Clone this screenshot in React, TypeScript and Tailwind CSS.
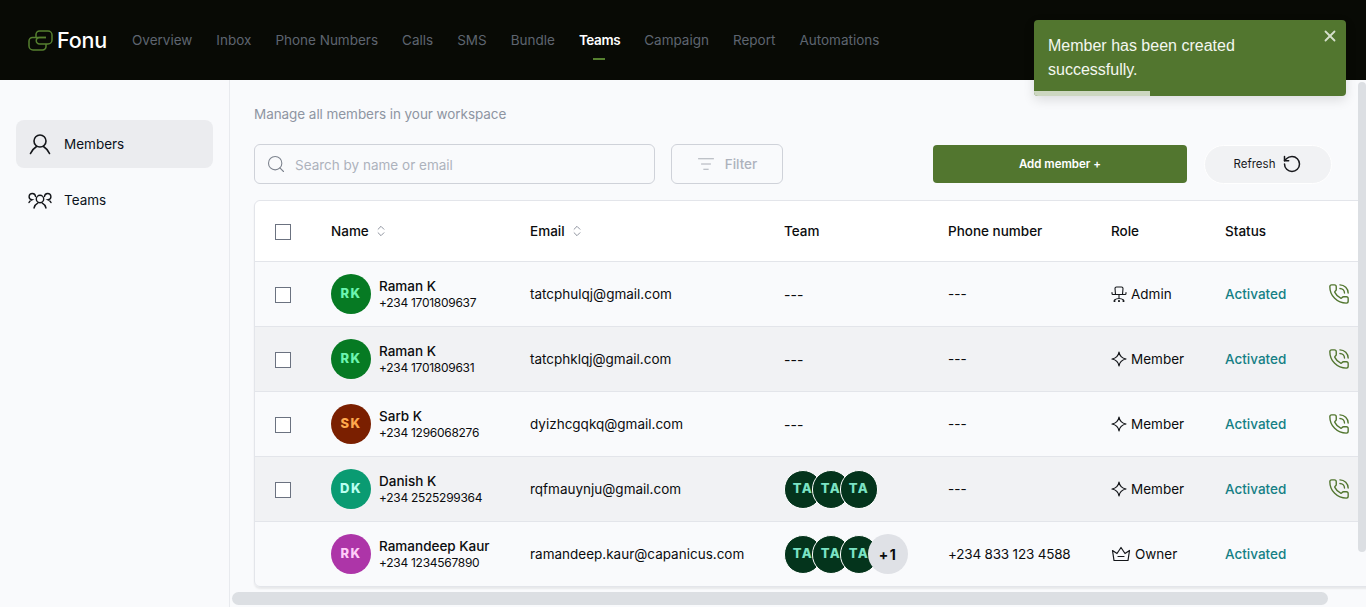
import React from 'react';
import { ChevronsUpDown, ListFilter, PhoneCall, RotateCcw, Search, X } from 'lucide-react';

const navItems = ['Overview', 'Inbox', 'Phone Numbers', 'Calls', 'SMS', 'Bundle', 'Teams', 'Campaign', 'Report', 'Automations'];

const rowCols = 'grid grid-cols-[76px_199px_254px_164px_163px_114px_104px_40px] items-center';

type Member = {
    initials: string;
    avatar: string;
    name: string;
    phone: string;
    email: string;
    teams: number;
    extra?: boolean;
    number: string;
    role: 'Admin' | 'Member' | 'Owner';
};

const members: Member[] = [
    { initials: 'RK', avatar: 'bg-[#067a23] text-[#6df5b0]', name: 'Raman K', phone: '+234 1701809637', email: 'tatcphulqj@gmail.com', teams: 0, number: '---', role: 'Admin' },
    { initials: 'RK', avatar: 'bg-[#067a23] text-[#6df5b0]', name: 'Raman K', phone: '+234 1701809631', email: 'tatcphklqj@gmail.com', teams: 0, number: '---', role: 'Member' },
    { initials: 'SK', avatar: 'bg-[#7a1f00] text-[#ffa94d]', name: 'Sarb K', phone: '+234 1296068276', email: 'dyizhcgqkq@gmail.com', teams: 0, number: '---', role: 'Member' },
    { initials: 'DK', avatar: 'bg-[#0a9b72] text-[#b9fff0]', name: 'Danish K', phone: '+234 2525299364', email: 'rqfmauynju@gmail.com', teams: 3, number: '---', role: 'Member' },
    { initials: 'RK', avatar: 'bg-[#ad35a8] text-[#ffcdf8]', name: 'Ramandeep Kaur', phone: '+234 1234567890', email: 'ramandeep.kaur@capanicus.com', teams: 3, extra: true, number: '+234 833 123 4588', role: 'Owner' },
];

function Logo() {
    return (
        <svg width="25" height="21" viewBox="0 0 25 21" fill="none" stroke="#55802f" strokeWidth="1.500">
            <path d="M8 7.500V4.500A3.500 3.500 0 0 1 11.500 1H20a4 4 0 0 1 4 4v5a4 4 0 0 1-4 4H11.500A3.250 3.250 0 0 1 11.500 7.500H18" />
            <path d="M18 7.500H4.500A3.500 3.500 0 0 0 1 11v5a4 4 0 0 0 4 4h9.500a3.500 3.500 0 0 0 3.500-3.500V14" />
        </svg>
    );
}

function UserIcon() {
    return (
        <svg width="22" height="22" viewBox="0 0 22 22" fill="none" stroke="#14161a" strokeWidth="1.600" strokeLinecap="round">
            <circle cx="11" cy="8" r="6" />
            <path d="M1.500 20.500C3 16.500 6 14.500 7.500 13.500M20.500 20.500C19 16.500 16 14.500 14.500 13.500" />
        </svg>
    );
}

function TeamsIcon() {
    return (
        <svg width="24" height="20" viewBox="0 0 24 20" fill="none" stroke="#14161a" strokeWidth="1.400" strokeLinecap="round">
            <circle cx="12" cy="9" r="3.700" />
            <path d="M6 18c.6-2.600 2.200-4.300 4-5.200M18 18c-.6-2.600-2.200-4.300-4-5.200" />
            <path d="M7.500 6.500A3.200 3.200 0 1 0 3.800 9.800C2.500 10.300 1.500 11.200 1 12.500" />
            <path d="M16.500 6.500A3.200 3.200 0 1 1 20.200 9.800C21.500 10.300 22.500 11.200 23 12.500" />
        </svg>
    );
}

function RoleIcon({ role }: { role: Member['role'] }) {
    if (role === 'Admin') {
        return (
            <svg width="16" height="16" viewBox="0 0 16 16" fill="none" stroke="#14161a" strokeWidth="1.100" strokeLinecap="round" strokeLinejoin="round">
                <path d="M4.500 8.500 4 2.500A1.500 1.500 0 0 1 5.500 1h5A1.500 1.500 0 0 1 12 2.500l-.5 6" />
                <path d="M1 6.500v1c0 .6.400 1 1 1h12c.6 0 1-.4 1-1v-1M8 8.500v4M3.500 14c1.200-1 2.800-1.500 4.500-1.500s3.300.5 4.500 1.500" />
                <circle cx="3.500" cy="15" r=".5" />
                <circle cx="8" cy="15" r=".5" />
                <circle cx="12.500" cy="15" r=".5" />
            </svg>
        );
    }
    if (role === 'Owner') {
        return (
            <svg width="20" height="16" viewBox="0 0 20 16" fill="none" stroke="#14161a" strokeWidth="1.200" strokeLinejoin="round" strokeLinecap="round">
                <path d="M1.500 4.500 6 7.500 10 1.500l4 6 4.500-3-1.500 10H3Z" />
                <path d="M7 10.500h6" />
            </svg>
        );
    }
    return (
        <svg width="16" height="16" viewBox="0 0 16 16" fill="none" stroke="#14161a" strokeWidth="1.200" strokeLinejoin="round">
            <path d="M8 1c.6 4 2.600 6.200 7 7-4.400.8-6.400 3-7 7-.6-4-2.600-6.200-7-7 4.400-.8 6.400-3 7-7Z" />
        </svg>
    );
}

function Checkbox() {
    return <div className="ml-5 mt-px h-4 w-4 border border-[#6b7280] bg-white"></div>;
}

function TeamStack({ count, extra }: { count: number; extra?: boolean }) {
    if (!count) return <span>---</span>;
    return (
        <div className="flex items-center">
            {Array.from({ length: count }).map((_, i) => (
                <div
                    key={i}
                    className="-mr-2.5 flex h-[39px] w-[38px] shrink-0 items-center justify-center rounded-full border border-white bg-[#04341c] text-[13px] font-extrabold tracking-[1.500px] text-[#7be3c4]"
                >
                    TA
                </div>
            ))}
            {extra && (
                <div className="flex h-10 w-10 shrink-0 items-center justify-center rounded-full bg-[#dfe1e6] text-[14px] font-bold tracking-[1.500px] text-[#0b0c0e]">
                    +1
                </div>
            )}
        </div>
    );
}

export default function App() {
    return (
        <div className="relative h-[607px] w-[1366px] overflow-hidden bg-[#f9fafc] font-['Inter',sans-serif] text-[14px] text-[#0b0c0e]">
            {/* Top nav */}
            <header className="flex h-20 items-center bg-[#080a05] pl-7">
                <Logo />
                <span className="ml-1 w-[52px] text-[21.500px] font-medium tracking-[-0.200px] text-white">Fonu</span>
                <nav className="ml-[23px] flex gap-6">
                    {navItems.map((item) => (
                        <div key={item} className="relative">
                            <span className={item === 'Teams' ? 'text-[13.500px] font-semibold tracking-[-0.400px] text-white' : 'text-[13.500px] text-[#5e6570]'}>
                                {item}
                            </span>
                            {item === 'Teams' && <div className="absolute left-[14px] top-[29px] h-0.5 w-3 bg-[#55802f]"></div>}
                        </div>
                    ))}
                </nav>
            </header>

            <div className="flex h-[527px]">
                {/* Sidebar */}
                <aside className="w-[230px] shrink-0 border-r border-[#e8eaee] px-4 pt-10">
                    <div className="flex h-12 items-center gap-[13px] rounded-lg bg-[#ebecef] pl-[13px] text-[13.500px] text-[#0b1220]">
                        <UserIcon />
                        Members
                    </div>
                    <div className="mt-2 flex h-12 items-center gap-[12px] pl-3 text-[13.500px] text-[#0b1220]">
                        <TeamsIcon />
                        Teams
                    </div>
                </aside>

                <main className="min-w-0 flex-1 overflow-hidden pl-6 pt-[26px]">
                    <p className="text-[13.500px] leading-4 tracking-[-0.060px] text-[#8e95a2]">Manage all members in your workspace</p>

                    {/* Toolbar */}
                    <div className="mt-[22px] flex h-10 items-center">
                        <div className="flex h-10 w-[401px] items-center rounded-md border border-[#cfd2d9] pl-[11px] text-[13.500px] text-[#adb2bc]">
                            <Search className="h-[20px] w-[20px] text-[#7d838e]" strokeWidth={1.300} />
                            <span className="ml-[9px] pt-0.5">Search by name or email</span>
                        </div>
                        <div className="ml-4 flex h-10 w-28 items-center justify-center gap-2.5 rounded-md border border-[#cfd2d9] text-[13.500px] font-medium text-[#adb2bc]">
                            <ListFilter className="h-[18px] w-[18px] text-[#a0a5af]" strokeWidth={1.200} />
                            Filter
                        </div>
                        <div className="ml-[150px] flex h-[38px] w-[254px] items-center justify-center rounded-[4px] bg-[#52762f] pt-0.5 text-[11.500px] font-semibold text-white">
                            Add member +
                        </div>
                        <div className="ml-[17px] flex h-[39px] w-[128px] items-center justify-center gap-[7px] rounded-full border border-white bg-[#f1f2f4] text-[11.500px] text-[#17181c]">
                            <span className="pt-0.5">Refresh</span>
                            <RotateCcw className="h-5 w-5" strokeWidth={1.800} />
                        </div>
                    </div>

                    {/* Members table */}
                    <div className="mt-4 w-[1160px] rounded-l-md border border-[#e3e5ea] shadow-[0_2px_2px_rgba(0,0,0,0.07)]">
                        <div className={`${rowCols} h-[60px] rounded-tl-md bg-white text-[13.500px]`}>
                            <Checkbox />
                            <div className="flex items-center gap-[5px] font-medium">
                                Name <ChevronsUpDown className="h-[14px] w-[14px] text-[#6b7280]" strokeWidth={1.300} />
                            </div>
                            <div className="flex items-center gap-[5px] font-medium">
                                Email <ChevronsUpDown className="h-[14px] w-[14px] text-[#6b7280]" strokeWidth={1.300} />
                            </div>
                            <div className="font-medium">Team</div>
                            <div className="font-medium">Phone number</div>
                            <div className="font-medium">Role</div>
                            <div className="font-medium">Status</div>
                            <div></div>
                        </div>
                        {members.map((m, i) => (
                            <div
                                key={m.phone}
                                className={`${rowCols} h-[65px] border-t border-[#e3e5ea] ${i % 2 === 1 ? 'bg-[#f1f2f4]' : ''}`}
                            >
                                {m.role === 'Owner' ? <div></div> : <Checkbox />}
                                <div className="flex items-center gap-2">
                                    <div className={`flex h-10 w-10 shrink-0 items-center justify-center rounded-full text-[13px] font-extrabold tracking-[1.500px] ${m.avatar}`}>
                                        {m.initials}
                                    </div>
                                    <div>
                                        <div className="text-[13.500px] font-medium leading-[18px]">{m.name}</div>
                                        <div className="text-[12px] leading-[16px] tracking-[-0.280px]">{m.phone}</div>
                                    </div>
                                </div>
                                <div className="whitespace-nowrap text-[13.500px]">{m.email}</div>
                                <TeamStack count={m.teams} extra={m.extra} />
                                <div className={m.number === '---' ? 'text-[13.500px]' : 'text-[13.500px] tracking-[-0.200px]'}>{m.number}</div>
                                <div className="flex items-center gap-1 text-[13.500px]">
                                    <RoleIcon role={m.role} />
                                    {m.role}
                                </div>
                                <div className="text-[13.500px] font-medium text-[#157f85]">Activated</div>
                                <div>{m.role !== 'Owner' && <PhoneCall className="-ml-px h-[22px] w-[22px] text-[#52762f]" strokeWidth={1.500} />}</div>
                            </div>
                        ))}
                    </div>
                </main>
            </div>

            {/* Scrollbars */}
            <div className="absolute right-0 top-[82px] h-[470px] w-2 rounded-full bg-[#dcdfe3]"></div>
            <div className="absolute bottom-[2px] left-[232px] h-[13px] w-[1096px] rounded-full bg-[#dcdfe3]"></div>

            {/* Toast */}
            <div className="absolute left-[1034px] top-5 h-[76px] w-[312px] overflow-hidden rounded-[4px] bg-[#52762f] font-['Liberation_Sans',sans-serif] text-white shadow-[0_4px_12px_rgba(0,0,0,0.12)]">
                <p className="pl-[14px] pt-[14px] text-[16px] leading-[24px] text-[#f4f7f0]">
                    Member has been created
                    <br />
                    successfully.
                </p>
                <X className="absolute right-[7px] top-[7px] h-[18px] w-[18px] text-[#d5dfcb]" strokeWidth={2.400} />
                <div className="absolute bottom-0 left-0 h-[5px] w-[116px] bg-[#cdd7c1]"></div>
            </div>
        </div>
    );
}
